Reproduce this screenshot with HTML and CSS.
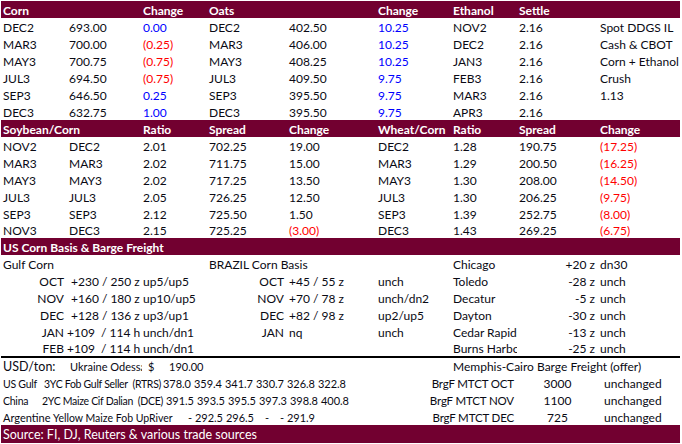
FILE: index.html
```html
<!DOCTYPE html>
<html lang="en">
<head>
<meta charset="utf-8">
<title>Grain markets</title>
<link rel="stylesheet" href="styles.css">
</head>
<body>
<table class="sheet">
<colgroup><col class="c1"><col class="c2"><col class="c3"><col class="c4"><col class="c5"><col class="c6"><col class="c7"><col class="c8"><col class="c9"></colgroup>
<tr class="band"><td>Corn</td><td></td><td>Change</td><td>Oats</td><td></td><td>Change</td><td>Ethanol</td><td>Settle</td><td></td></tr>
<tr><td>DEC2</td><td>693.00</td><td class="up">0.00</td><td>DEC2</td><td>402.50</td><td class="up">10.25</td><td>NOV2</td><td>2.16</td><td>Spot DDGS IL</td></tr>
<tr><td>MAR3</td><td>700.00</td><td class="dn">(0.25)</td><td>MAR3</td><td>406.00</td><td class="up">10.25</td><td>DEC2</td><td>2.16</td><td>Cash &amp; CBOT</td></tr>
<tr><td>MAY3</td><td>700.75</td><td class="dn">(0.75)</td><td>MAY3</td><td>408.25</td><td class="up">10.25</td><td>JAN3</td><td>2.16</td><td>Corn + Ethanol</td></tr>
<tr><td>JUL3</td><td>694.50</td><td class="dn">(0.75)</td><td>JUL3</td><td>409.50</td><td class="up">9.75</td><td>FEB3</td><td>2.16</td><td>Crush</td></tr>
<tr><td>SEP3</td><td>646.50</td><td class="up">0.25</td><td>SEP3</td><td>395.50</td><td class="up">9.75</td><td>MAR3</td><td>2.16</td><td>1.13</td></tr>
<tr><td>DEC3</td><td>632.75</td><td class="up">1.00</td><td>DEC3</td><td>395.50</td><td class="up">9.75</td><td>APR3</td><td>2.16</td><td></td></tr>
<tr class="band"><td>Soybean/Corn</td><td></td><td>Ratio</td><td>Spread</td><td>Change</td><td>Wheat/Corn</td><td>Ratio</td><td>Spread</td><td>Change</td></tr>
<tr><td>NOV2</td><td>DEC2</td><td>2.01</td><td>702.25</td><td>19.00</td><td>DEC2</td><td>1.28</td><td>190.75</td><td class="dn">(17.25)</td></tr>
<tr><td>MAR3</td><td>MAR3</td><td>2.02</td><td>711.75</td><td>15.00</td><td>MAR3</td><td>1.29</td><td>200.50</td><td class="dn">(16.25)</td></tr>
<tr><td>MAY3</td><td>MAY3</td><td>2.02</td><td>717.25</td><td>13.50</td><td>MAY3</td><td>1.30</td><td>208.00</td><td class="dn">(14.50)</td></tr>
<tr><td>JUL3</td><td>JUL3</td><td>2.05</td><td>726.25</td><td>12.50</td><td>JUL3</td><td>1.30</td><td>206.25</td><td class="dn">(9.75)</td></tr>
<tr><td>SEP3</td><td>SEP3</td><td>2.12</td><td>725.50</td><td>1.50</td><td>SEP3</td><td>1.39</td><td>252.75</td><td class="dn">(8.00)</td></tr>
<tr class="short"><td>NOV3</td><td>DEC3</td><td>2.15</td><td>725.25</td><td class="dn">(3.00)</td><td>DEC3</td><td>1.43</td><td>269.25</td><td class="dn">(6.75)</td></tr>
<tr class="band"><td colspan="9">US Corn Basis &amp; Barge Freight</td></tr>
<tr><td colspan="3">Gulf Corn</td><td colspan="3">BRAZIL Corn Basis</td><td>Chicago</td><td class="r">+20 z</td><td>dn30</td></tr>
<tr><td class="r">OCT</td><td class="ind">+230 / 250 z</td><td>up5/up5</td><td class="r">OCT</td><td>+45 / 55 z</td><td>unch</td><td>Toledo</td><td class="r">-28 z</td><td>unch</td></tr>
<tr><td class="r">NOV</td><td class="ind">+160 / 180 z</td><td>up10/up5</td><td class="r">NOV</td><td>+70 / 78 z</td><td>unch/dn2</td><td>Decatur</td><td class="r">-5 z</td><td>unch</td></tr>
<tr><td class="r">DEC</td><td class="ind">+128 / 136 z</td><td>up3/up1</td><td class="r">DEC</td><td>+82 / 98 z</td><td>up2/up5</td><td>Dayton</td><td class="r">-30 z</td><td>unch</td></tr>
<tr><td class="r">JAN</td><td class="r">+109&nbsp; / 114 h</td><td>unch/dn1</td><td class="r">JAN</td><td>nq</td><td>unch</td><td class="clip">Cedar Rapids</td><td class="r">-13 z</td><td>unch</td></tr>
<tr class="rule"><td class="r">FEB</td><td class="r">+109&nbsp; / 114 h</td><td>unch/dn1</td><td></td><td></td><td></td><td class="clip">Burns Harbor</td><td class="r">-25 z</td><td>unch</td></tr>
<tr><td colspan="3"><div class="usd"><span class="usd-label">USD/ton:</span><span class="odessa">Ukraine Odessa</span><span class="dollar">$</span><span class="usd-val">190.00</span></div></td><td colspan="3"></td><td colspan="3">Memphis-Cairo Barge Freight (offer)</td></tr>
<tr><td colspan="5"><div class="quote"><span class="o-us">US Gulf</span><span class="d-us">3YC Fob Gulf Seller&nbsp; (RTRS)</span><span class="num">378.0</span><span class="num">359.4</span><span class="num">341.7</span><span class="num">330.7</span><span class="num">326.8</span><span class="num">322.8</span></div></td><td colspan="2" class="r brg">BrgF MTCT OCT</td><td class="ctr">3000</td><td class="status">unchanged</td></tr>
<tr><td colspan="5"><div class="quote"><span class="o-cn">China</span><span class="d-cn">2YC Maize Cif Dalian&nbsp; (DCE)</span><span class="num">391.5</span><span class="num">393.5</span><span class="num">395.5</span><span class="num">397.3</span><span class="num">398.8</span><span class="num">400.8</span></div></td><td colspan="2" class="r brg">BrgF MTCT NOV</td><td class="ctr">1100</td><td class="status">unchanged</td></tr>
<tr><td colspan="5"><div class="quote"><span class="o-ar">Argentine</span><span class="d-ar">Yellow Maize Fob UpRiver</span><span class="num">-</span><span class="num">292.5</span><span class="num">296.5</span><span class="dash">-</span><span class="dash">-</span><span class="num">291.9</span></div></td><td colspan="2" class="r brg">BrgF MTCT DEC</td><td class="ctr">725</td><td class="status">unchanged</td></tr>
<tr class="band foot"><td colspan="9">Source: FI, DJ, Reuters &amp; various trade sources</td></tr>
</table>
</body>
</html>
```
FILE: styles.css
```css
html, body { margin: 0; padding: 0; background: #fff; }
body { padding: 1px 0 0 1px; width: 681px; height: 443px; overflow: hidden; }
.sheet {
  border-collapse: collapse;
  table-layout: fixed;
  width: 679px;
  font-family: Lato, "Open Sans", sans-serif;
  font-size: 12px;
  color: #0a0a14;
}
.c1 { width: 66px; } .c2 { width: 74px; } .c3 { width: 66px; }
.c4 { width: 80px; } .c5 { width: 89px; } .c6 { width: 75px; }
.c7 { width: 66px; } .c8 { width: 81px; } .c9 { width: 82px; }
tr { height: 17px; }
tr.short { height: 16px; }
td { padding: 2px 0 0 2px; white-space: nowrap; line-height: 14px; }
.band { background: #720030; color: #fff; font-weight: 700; }
.band.foot { height: 18px; font-weight: 400; font-size: 12.5px; }
.up { color: #0000ff; }
.dn { color: #ff0000; }
.r { text-align: right; padding-left: 0; padding-right: 3px; }
.ind { padding-left: 4px; }
.ctr { text-align: center; padding-left: 0; }
.status { padding-left: 6px; }
.brg { font-size: 11.5px; letter-spacing: -0.15px; }
.clip { overflow: hidden; }
.rule td { border-bottom: 2px solid #000; }
.usd, .quote { display: flex; font-size: 11px; }
.usd-label { width: 67px; font-size: 12.5px; }
.odessa { width: 72px; overflow: hidden; }
.dollar { width: 27px; padding-left: 6px; box-sizing: border-box; }
.num { width: 31px; text-align: right; }
.dash { width: 15px; text-align: right; }
.o-us { width: 41px; font-size: 10.5px; letter-spacing: -0.25px; }
.d-us { width: 116px; font-size: 10.5px; letter-spacing: -0.3px; }
.o-cn { width: 39px; font-size: 10.5px; letter-spacing: -0.25px; }
.d-cn { width: 121px; font-size: 10.5px; letter-spacing: -0.3px; }
.o-ar { width: 50px; }
.d-ar { width: 108px; font-size: 10.5px; }
```
